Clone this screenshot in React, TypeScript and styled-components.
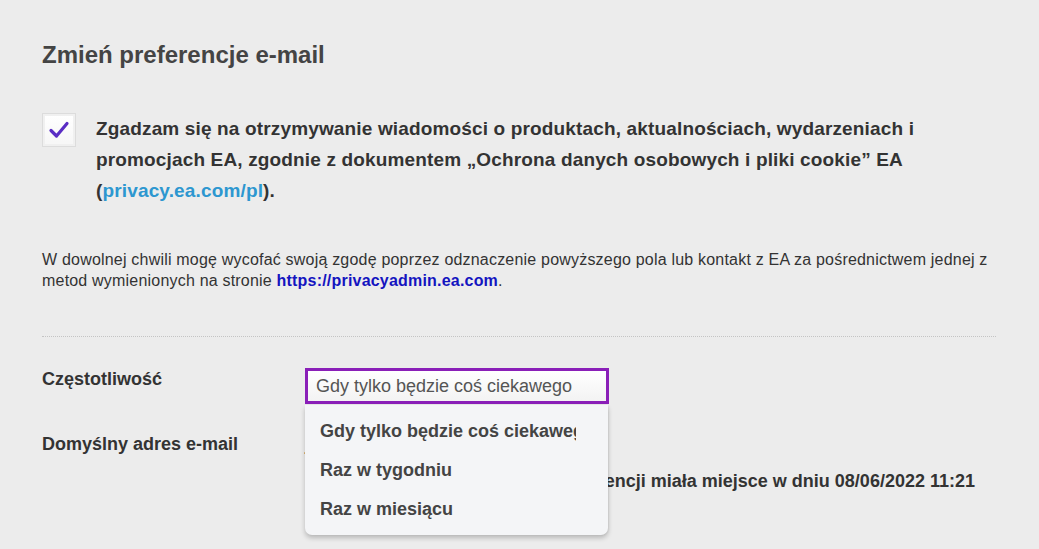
import React, { useState } from "react"
import styled, { createGlobalStyle } from "styled-components"

const GlobalStyle = createGlobalStyle`
  html, body {
    margin: 0;
    padding: 0;
    background: #ececec;
    font-family: "Liberation Sans", Arial, sans-serif;
    color: #333;
  }
`

const options = ["Gdy tylko będzie coś ciekawego", "Raz w tygodniu", "Raz w miesiącu"]

const CheckIcon: React.FC = () => (
  <svg width="22" height="20" viewBox="0 0 22 20">
    <path d="M3 10.5 L8.5 16 L19 3.5" fill="none" stroke="#5a2dc4" strokeWidth="3.2" strokeLinecap="round" strokeLinejoin="round" />
  </svg>
)

export default function App() {
  const [checked, setChecked] = useState(true)
  const [frequency] = useState(options[0])

  return (
    <>
      <GlobalStyle />
      <S.Page>
        <S.Title>Zmień preferencje e-mail</S.Title>

        <S.ConsentRow>
          <S.Checkbox onClick={() => setChecked(!checked)}>
            {checked && <CheckIcon />}
          </S.Checkbox>
          <S.ConsentText>
            Zgadzam się na otrzymywanie wiadomości o produktach, aktualnościach, wydarzeniach i
            promocjach EA, zgodnie z dokumentem „Ochrona danych osobowych i pliki cookie” EA
            (<S.ConsentLink href="#">privacy.ea.com/pl</S.ConsentLink>).
          </S.ConsentText>
        </S.ConsentRow>

        <S.Note>
          W dowolnej chwili mogę wycofać swoją zgodę poprzez odznaczenie powyższego pola lub kontakt z EA za
          pośrednictwem jednej z metod wymienionych na stronie{" "}
          <S.AdminLink href="#">https://privacyadmin.ea.com</S.AdminLink>.
        </S.Note>

        <S.Divider />

        <S.Form>
          <S.Label $top={1}>Częstotliwość</S.Label>
          <S.SelectWrap>
            <S.Select>{frequency}</S.Select>
            <S.Menu>
              {options.map((o) => (
                <S.MenuItem key={o}>{o}</S.MenuItem>
              ))}
            </S.Menu>
          </S.SelectWrap>

          <S.Label $top={30}>Domyślny adres e-mail</S.Label>
          <S.Value>
            <S.Email>jan.kowalski@example.com</S.Email>
            <S.Updated>Ostatnia aktualizacja Twoich preferencji miała miejsce w dniu 08/06/2022 11:21</S.Updated>
          </S.Value>
        </S.Form>
      </S.Page>
    </>
  )
}

const S = {
  Page: styled.div`
    width: 996px;
    min-height: 549px;
    box-sizing: border-box;
    padding: 41px 0 0 42px;
  `,
  Title: styled.h1`
    margin: 0;
    font-size: 24px;
    line-height: 28px;
    font-weight: bold;
    color: #444;
  `,
  ConsentRow: styled.div`
    display: flex;
    align-items: flex-start;
    gap: 20px;
    margin-top: 46px;
  `,
  Checkbox: styled.div`
    flex: none;
    width: 34px;
    height: 34px;
    margin-top: -2px;
    box-sizing: border-box;
    border: 1px solid #dcdcdc;
    background: linear-gradient(#ffffff, #f6f6f6);
    box-shadow: inset 0 0 0 2px #f0f0f0;
    display: flex;
    align-items: center;
    justify-content: center;
    cursor: pointer;
  `,
  ConsentText: styled.p`
    margin: 0;
    margin-top: -2px;
    width: 860px;
    font-size: 19px;
    letter-spacing: 0.15px;
    line-height: 31px;
    font-weight: bold;
    color: #333;
  `,
  ConsentLink: styled.a`
    color: #2d97d0;
    text-decoration: none;
  `,
  Note: styled.p`
    margin: 43px 0 0;
    font-size: 16px;
    letter-spacing: 0.2px;
    line-height: 21px;
    color: #333;
  `,
  AdminLink: styled.a`
    color: #1414c0;
    font-weight: bold;
    text-decoration: none;
  `,
  Divider: styled.div`
    margin-top: 45px;
    border-top: 1px dotted #c4c4c4;
  `,
  Form: styled.div`
    display: grid;
    grid-template-columns: 263px 1fr;
    margin-top: 31px;
  `,
  Label: styled.div<{ $top: number }>`
    padding-top: ${(p) => p.$top}px;
    font-size: 18px;
    line-height: 20px;
    font-weight: bold;
    color: #333;
  `,
  SelectWrap: styled.div`
    position: relative;
    width: 304px;
  `,
  Select: styled.div`
    height: 36px;
    box-sizing: border-box;
    border: 3px solid #8a1fb8;
    background: linear-gradient(#ffffff, #f3f3f3);
    padding: 0 8px;
    font-size: 18px;
    line-height: 30px;
    color: #555;
    white-space: nowrap;
    overflow: hidden;
  `,
  Menu: styled.div`
    position: absolute;
    z-index: 2;
    top: 37px;
    left: 0;
    width: 303px;
    box-sizing: border-box;
    padding: 7px 32px 6px 15px;
    background: #f4f5f7;
    border-radius: 0 0 7px 7px;
    box-shadow: 0 3px 5px rgba(0, 0, 0, 0.22), 1px 0 2px rgba(0, 0, 0, 0.06);
    overflow: hidden;
  `,
  MenuItem: styled.div`
    height: 39px;
    line-height: 39px;
    font-size: 18px;
    font-weight: bold;
    color: #444;
    white-space: nowrap;
    overflow: hidden;
  `,
  Value: styled.div`
    padding-top: 30px;
    font-size: 18px;
    font-weight: bold;
    color: #333;
  `,
  Email: styled.div`
    line-height: 20px;
  `,
  Updated: styled.div`
    margin-top: 17px;
    line-height: 20px;
    white-space: nowrap;
  `,
}
